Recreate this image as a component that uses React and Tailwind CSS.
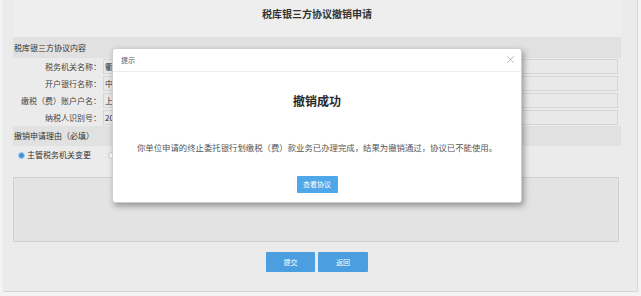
import React from 'react';

const rows = [
  { label: '税务机关名称：', value: '衢州市税务局第一税务所' },
  { label: '开户银行名称：', value: '中国工商银行股份有限公司' },
  { label: '缴税（费）账户户名：', value: '上海某某贸易有限公司' },
  { label: '纳税人识别号：', value: '201800000000000000' },
];

const FormRow = ({ label, value }) => (
  <div className="flex items-center h-[15px]">
    <div className="w-[88px] shrink-0 text-right text-[8px] leading-[15px] text-[#444] whitespace-nowrap">{label}</div>
    <div className="flex-1 ml-[2px] mr-[3px] h-[15px] bg-[#e9e9e9] border border-[#d6d6d6] text-[8px] leading-[13px] text-[#333] pl-[1px] whitespace-nowrap overflow-hidden">
      {value}
    </div>
  </div>
);

const SectionHeader = ({ children, h }) => (
  <div className={`${h} flex items-center bg-[#e1e1e1] text-[8px] text-[#333] pl-[1px]`}>{children}</div>
);

export default function App() {
  return (
    <div className="relative w-[641px] h-[296px] bg-[#f3f3f3] overflow-hidden font-['Microsoft_YaHei','Noto_Sans_CJK_SC',sans-serif]">
      <div className="ml-[3px] w-[635px] h-[292px] bg-[#ebebeb] border-r border-b border-[#d6d6d6] pl-[10px] pr-[16px]">
        {/* page title */}
        <div className="h-[37px] bg-[#eeeeee] flex justify-center pt-[8px]">
          <span className="text-[10px] leading-[11px] font-bold text-[#333]">税库银三方协议撤销申请</span>
        </div>

        <SectionHeader h="h-[21px]">税库银三方协议内容</SectionHeader>
        <div className="flex flex-col gap-[2px] py-[1px]">
          {rows.map(r => (
            <FormRow key={r.label} label={r.label} value={r.value} />
          ))}
        </div>

        <SectionHeader h="h-[20px]">撤销申请理由（必填）</SectionHeader>
        <div className="h-[18px] flex items-center pl-[5px]">
          <span className="w-[7px] h-[7px] rounded-full bg-[#3d93dc] border border-[#a9cdee]" />
          <span className="ml-[2px] text-[8px] text-[#333]">主管税务机关变更</span>
          <span className="ml-[17px] w-[7px] h-[7px] rounded-full bg-white border border-[#c8c8c8]" />
          <span className="ml-[2px] text-[8px] text-[#333]">其他</span>
        </div>
        <div className="mt-[13px] mr-[2px] h-[65px] bg-[#e3e3e3] border border-[#d0d0d0]" />

        <div className="mt-[10px] flex justify-center gap-[3px]">
          <button className="w-[49px] h-[20px] bg-[#4b9fe0] rounded-[1px] text-white text-[7px]">提交</button>
          <button className="w-[50px] h-[20px] bg-[#4b9fe0] rounded-[1px] text-white text-[7px]">返回</button>
        </div>
      </div>

      {/* dialog */}
      <div className="absolute left-[112px] top-[48px] w-[410px] h-[155px] bg-white rounded-[3px] border border-[#cfcfcf] shadow-[2px_3px_6px_rgba(0,0,0,0.35)] flex flex-col">
        <div className="h-[23px] shrink-0 flex items-center justify-between border-b border-[#ececec] pl-[8px] pr-[6px]">
          <span className="text-[7px] text-[#555]">提示</span>
          <svg width="9" height="9" viewBox="0 0 10 10" className="mt-[-2px]">
            <path d="M1.5 1.5 L8.5 8.5 M8.5 1.5 L1.5 8.5" stroke="#a8a8a8" strokeWidth="0.9" />
          </svg>
        </div>
        <div className="flex flex-col items-center">
          <div className="mt-[22px] text-[12px] leading-[14px] font-semibold text-[#2a2a2a]">撤销成功</div>
          <div className="mt-[34px] text-[8.4px] leading-[10px] text-[#555] whitespace-nowrap">
            你单位申请的终止委托银行划缴税（费）款业务已办理完成，结果为撤销通过，协议已不能使用。
          </div>
          <button className="mt-[24px] w-[41px] h-[17px] bg-[#4fa6e8] text-white text-[7px] rounded-[1px]">查看协议</button>
        </div>
      </div>
    </div>
  );
}
